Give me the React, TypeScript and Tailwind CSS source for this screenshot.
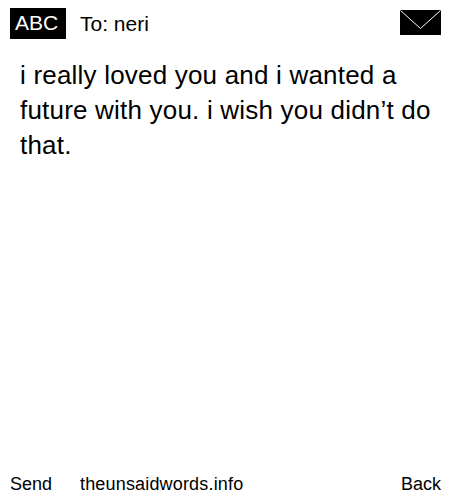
export default function App() {
  return (
    <div className="flex h-[500px] w-[450px] flex-col justify-between bg-white font-['Liberation_Sans',Arial,sans-serif] text-black">
      <div>
        <div className="flex items-center justify-between pt-2 pl-[10px] pr-[9px]">
          <div className="flex items-center">
            <div className="flex h-[31px] w-[56px] items-center bg-black pl-[5px] pb-[1px] text-[21px] text-white">ABC</div>
            <div className="ml-[14px] text-[21px] leading-[31px]">To: neri</div>
          </div>
          <svg width="41" height="25" viewBox="0 0 41 25" className="-mt-[2px]">
            <rect width="41" height="25" fill="#000" />
            <path d="M0.5 0.5 L20.5 18.5 L40.5 0.5" fill="none" stroke="#fff" strokeWidth="1" />
          </svg>
        </div>
        <p className="mt-[19px] pl-5 pr-[15px] text-[26px] leading-[35px] tracking-[0.2px]">i really loved you and i wanted a future with you. i wish you didn’t do that.</p>
      </div>
      <div className="flex items-center justify-between pr-[9px] pb-[4px] pl-[10px] text-lg leading-[24px]">
        <div className="flex">
          <span className="w-[70px]">Send</span>
          <span className="tracking-[0.17px]">theunsaidwords.info</span>
        </div>
        <span>Back</span>
      </div>
    </div>
  )
}
